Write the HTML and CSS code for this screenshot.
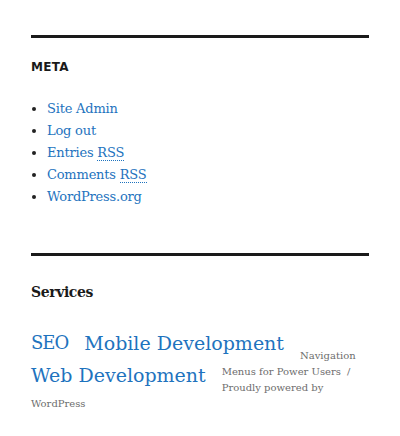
FILE: index.html
```html
<!DOCTYPE html>
<html lang="en">
<head>
<meta charset="utf-8">
<title>Sidebar</title>
<link rel="stylesheet" href="styles.css">
</head>
<body>
<div class="sidebar">
  <aside class="widget widget-meta">
    <h2 class="widget-title">Meta</h2>
    <ul class="meta-list">
      <li><a href="#">Site Admin</a></li>
      <li><a href="#">Log out</a></li>
      <li><a href="#">Entries <abbr title="Really Simple Syndication">RSS</abbr></a></li>
      <li><a href="#">Comments <abbr title="Really Simple Syndication">RSS</abbr></a></li>
      <li><a href="#">WordPress.org</a></li>
    </ul>
  </aside>
  <aside class="widget widget-services">
    <h2 class="services-title">Services</h2>
    <div class="tagcloud">
      <a class="tag tag-short" href="#">SEO</a>
      <a class="tag" href="#">Mobile Development</a>
      <a class="tag" href="#">Web Development</a>
    </div>
    <p class="site-info"><a href="#">Navigation Menus for Power Users</a> <span class="sep">/</span> <a href="#">Proudly powered by WordPress</a></p>
  </aside>
</div>
</body>
</html>
```
FILE: styles.css
```css
html, body {
  margin: 0;
  padding: 0;
  background: #ffffff;
}
body {
  font-family: "DejaVu Serif", serif;
  color: #333333;
}
a {
  color: #1e73be;
  text-decoration: none;
}
.sidebar {
  padding: 35px 31px 0;
}
.widget {
  border-top: 3px solid #1a1a1a;
}
.widget-meta {
  padding-top: 21px;
  padding-bottom: 45.85px;
}
.widget-title {
  margin: 0;
  font-family: "DejaVu Sans", sans-serif;
  font-weight: bold;
  font-size: 12px;
  line-height: 16px;
  letter-spacing: 0.3px;
  text-transform: uppercase;
  color: #1a1a1a;
}
.meta-list {
  list-style: none;
  margin: 22.5px 0 0;
  padding: 0 0 0 16px;
  font-size: 13px;
  line-height: 22px;
  letter-spacing: -0.2px;
}
.meta-list li::before {
  content: "";
  display: inline-block;
  width: 4px;
  height: 4px;
  border-radius: 50%;
  background: #222222;
  margin-left: -15px;
  margin-right: 11px;
  vertical-align: middle;
}
.meta-list abbr {
  text-decoration: none;
  border-bottom: 1px dotted #1e73be;
}
.widget-services {
  padding-top: 26.15px;
}
.services-title {
  margin: 0;
  font-size: 14px;
  line-height: 20px;
  letter-spacing: -0.4px;
  font-weight: bold;
  color: #1a1a1a;
}
.tagcloud {
  margin-top: 24.15px;
}
.tag {
  float: left;
  margin-right: 16px;
  font-size: 19px;
  line-height: 32px;
}
.tag-short {
  font-size: 18px;
  letter-spacing: -1px;
}
.site-info {
  margin: 0;
  padding-top: 21.4px;
  font-size: 10px;
  line-height: 16px;
  color: #6d6d6d;
}
.site-info a {
  color: #6d6d6d;
}
.sep {
  margin: 0 2px 0 3px;
}
```
